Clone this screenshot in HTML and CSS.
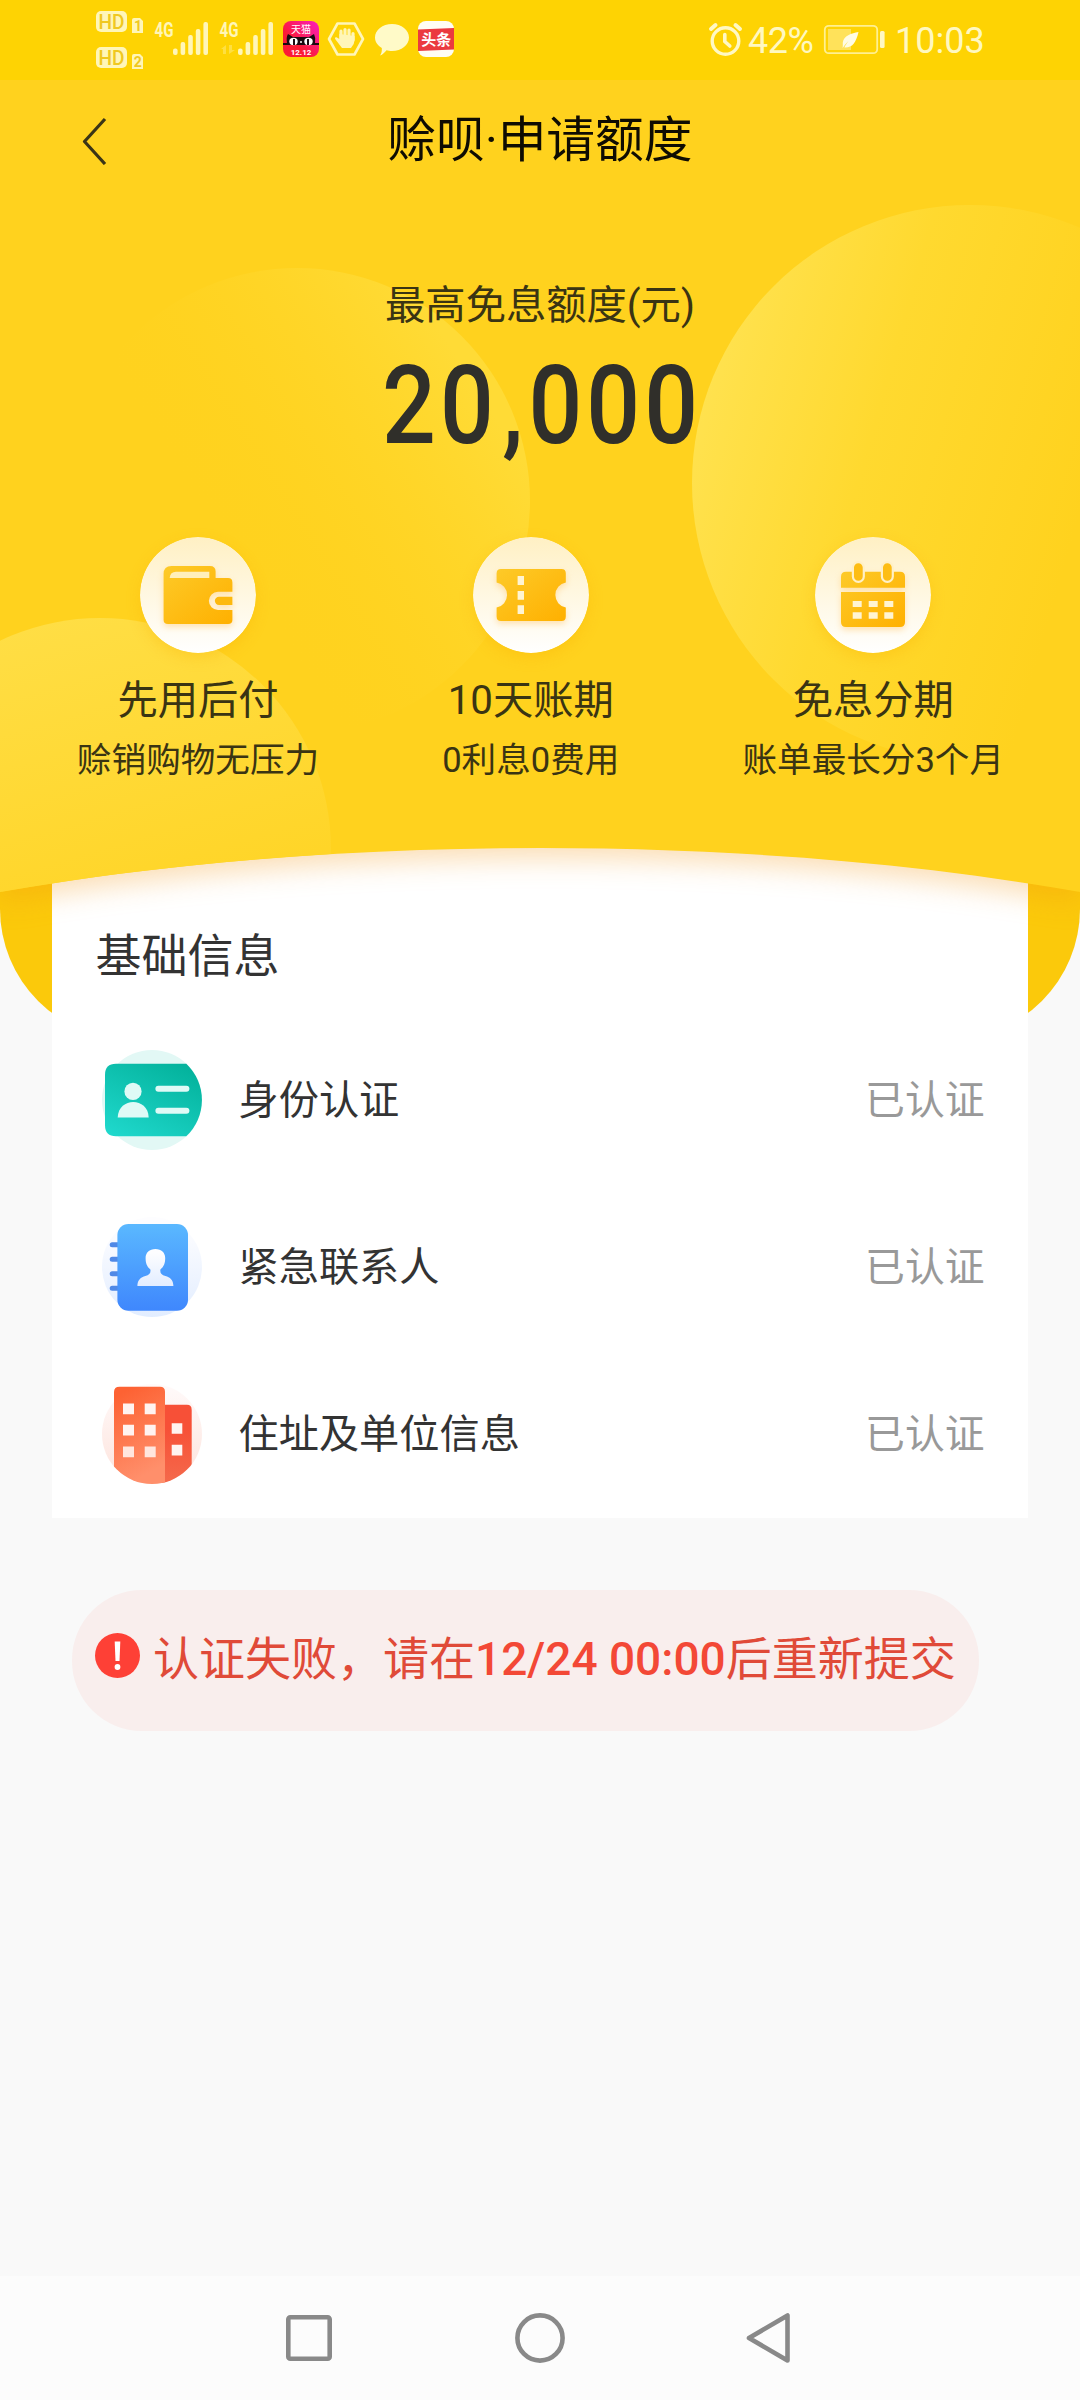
FILE: index.html
```html
<!DOCTYPE html>
<html lang="zh-CN">
<head>
<meta charset="utf-8">
<title>赊呗·申请额度</title>
<link rel="stylesheet" href="styles.css">
</head>
<body>
<div class="page">
  <header class="status">
    <svg class="status-left" width="370" height="80" viewBox="90 0 370 80">
      <g fill="#fff6b8">
        <rect x="96" y="11" width="31" height="21" rx="5"/>
        <rect x="96" y="47" width="31" height="21" rx="5"/>
        <path d="M134 18h6l3 3v12h-11v-13q0-2 2-2zM134 54h6l3 3v12h-11v-13q0-2 2-2z"/>
        <g id="bars">
          <rect x="173" y="48.5" width="4.600" height="6.5" rx="2"/>
          <rect x="180.600" y="42" width="4.600" height="13" rx="2"/>
          <rect x="188.200" y="35" width="4.600" height="20" rx="2"/>
          <rect x="195.800" y="29" width="4.600" height="26" rx="2"/>
          <rect x="203.400" y="22" width="4.600" height="33" rx="2"/>
        </g>
        <use href="#bars" x="65"/>
        <path opacity=".35" d="M221 49l5-4v9h-3v-5zM229 45v9l6-4h-3v-5z"/>
        <text class="net" x="154.500" y="37" textLength="19" lengthAdjust="spacingAndGlyphs">4G</text>
        <text class="net" x="219.500" y="37" textLength="19" lengthAdjust="spacingAndGlyphs">4G</text>
      </g>
      <g fill="#f0c820">
        <text class="hd" x="98.500" y="28.500" textLength="26" lengthAdjust="spacingAndGlyphs">HD</text>
        <text class="hd" x="98.500" y="64.500" textLength="26" lengthAdjust="spacingAndGlyphs">HD</text>
        <text class="sim" x="134" y="31">1</text>
        <text class="sim" x="133.800" y="67">2</text>
      </g>
      <defs><linearGradient id="tm" x1="0" y1="1" x2="1" y2="0"><stop offset=".35" stop-color="#fb1a35"/><stop offset="1" stop-color="#fb1fc0"/></linearGradient></defs>
      <rect x="283" y="21" width="36" height="36" rx="8" fill="url(#tm)"/>
      <path d="M283 43h4q-1-6 1-9l5 3h16l5-3q2 4 1 9h4v2h-36z" fill="#1a0a10"/>
      <ellipse cx="293.500" cy="41.500" rx="4.200" ry="3.700" fill="#fff"/><ellipse cx="308.500" cy="41.500" rx="4.200" ry="3.700" fill="#fff"/>
      <path d="M294 39v6M308 39v6" stroke="#1a0a10" stroke-width="2"/>
      <circle cx="301" cy="42" r="1" fill="#fff"/>
      <text class="tm-name" x="301" y="32.500">天猫</text>
      <text class="tm-date" x="301" y="55">12.12</text>
      <path d="M337.500 23.500h17l8.500 15.500-8.500 15.500h-17L329 39z" fill="none" stroke="#fff6b8" stroke-width="2.600" stroke-linejoin="round"/>
      <path d="M341 38V31M345 38V29.500M349 38v-8M353 40v-6.500" stroke="#fff6b8" stroke-width="3.200" stroke-linecap="round"/>
      <path d="M339.400 34v5l-2.500-1.500c-2-.8-2.500 1-1.200 2.200l6.300 8.300h9q3.600-4 3.600-8v-4z" fill="#fff6b8"/>
      <path d="M392 24c9.500 0 17 6 17 13.500S401.500 51 392 51c-2 0-4-.3-5.500-.8-1.500 2-4 4.500-6.500 5.300 1.500-2 2-4.500 1.800-7.500-4-2.500-6.800-6-6.800-10.500C375 30 382.500 24 392 24z" fill="#fffac8"/>
      <rect x="418" y="21" width="36" height="36" rx="8" fill="#fffdf4"/>
      <path d="M418 29.500l36-1.500v21.500l-36 1.500z" fill="#eb3a3f"/>
      <text class="tt" x="436.300" y="45">头条</text>
    </svg>
    <div class="status-right">
      <svg width="36" height="80" viewBox="708 0 36 80" fill="none" stroke="#fff8c4" stroke-linecap="round">
        <circle cx="725.500" cy="41" r="13.300" stroke-width="3.400"/><path d="M724.800 34.500v7l5 4.500" stroke-width="3.600"/><path d="M711 29l4.500-4M740 29l-4.500-4" stroke-width="4"/>
      </svg>
      <span class="pct">42%</span>
      <svg class="batt" width="64" height="80" viewBox="823 0 64 80">
        <rect x="824.800" y="25.800" width="52.400" height="27.400" rx="4" fill="none" stroke="#fff091" stroke-width="1.800"/>
        <rect x="828" y="29" width="23" height="21" fill="#ffe25a"/>
        <rect x="880" y="31" width="4.600" height="17" rx="1.500" fill="#fff8c4"/>
        <path d="M858.500 32c-7 1-15 4-15.700 10.500-.1 2 .3 3.300-.3 5.500 1.500-1.500 2.500-4 6-7-2 3-3.500 4.500-4 6.500 7.500.5 11.500-4.500 14-15.500z" fill="#fffce4"/>
      </svg>
      <span class="clock">10:03</span>
    </div>
  </header>

  <div class="hero-tail"></div>
  <svg class="hero-bg" width="1080" height="980" viewBox="0 0 1080 980">
    <defs>
      <linearGradient id="g1" x1="0" y1=".35" x2=".7" y2=".55"><stop offset="0" stop-color="#ffe250"/><stop offset=".45" stop-color="#ffd92f"/><stop offset="1" stop-color="#ffd21e"/></linearGradient>
      <linearGradient id="g2" x1=".85" y1=".2" x2=".3" y2=".55"><stop offset="0" stop-color="#ffdb36"/><stop offset="1" stop-color="#ffd21e" stop-opacity="0"/></linearGradient>
      <linearGradient id="g3" x1=".35" y1="0" x2=".6" y2=".85"><stop offset="0" stop-color="#ffde45"/><stop offset="1" stop-color="#ffd21e"/></linearGradient>
      <clipPath id="dome"><path d="M0 80H1080V892C900 860 710 848 540 848S180 860 0 892Z"/></clipPath>
    </defs>
    <path class="dome" d="M0 80H1080V892C900 860 710 848 540 848S180 860 0 892Z"/>
    <g clip-path="url(#dome)">
      <circle cx="297" cy="501" r="233" fill="url(#g2)"/>
      <circle cx="970" cy="483" r="278" fill="url(#g1)"/>
      <circle cx="100" cy="849" r="231" fill="url(#g3)"/>
    </g>
  </svg>

  <section class="hero">
    <div class="navbar">
      <svg class="back" width="26" height="48" viewBox="0 0 26 48"><path d="M24 2L3.500 24.500 24 47" fill="none" stroke="#3b3516" stroke-width="3.200" stroke-linejoin="round"/></svg>
      <h1 class="title">赊呗·申请额度</h1>
    </div>
    <p class="label">最高免息额度(元)</p>
    <p class="amount"><span class="digits">20<span class="comma">,</span>000</span></p>
    <div class="features">
      <svg width="0" height="0" class="defs"><defs>
        <linearGradient id="disc" x1="0" y1="0" x2="0" y2="1"><stop offset="0" stop-color="#fff0c4"/><stop offset="1" stop-color="#fff"/></linearGradient>
        <linearGradient id="or" x1="0" y1="0" x2="1" y2="1"><stop offset="0" stop-color="#fdca28"/><stop offset="1" stop-color="#ffb000"/></linearGradient>
      </defs></svg>
      <div class="feature">
        <svg class="disc" width="116" height="116" viewBox="0 0 116 116">
          <circle cx="58" cy="58" r="58" fill="url(#disc)"/>
          <g class="glyph"><path d="M31.500 29H70q5.600 0 5.600 5.500V41H88q4.400 0 4.400 4.400V54.700H78a9.100 9.100 0 0 0 0 18.300H92.400V83q0 4-4.400 4H28q-4.400 0-4.400-4V37q0-8 7.900-8z" fill="url(#or)"/>
          <path d="M92.400 59.700V68H79a4.150 4.150 0 0 1 0-8.300z" fill="#fdb90e"/></g>
          <path d="M29.700 41q.5-6.300 6.300-6.300H69.300V41z" fill="#ffefbb"/>
        </svg>
        <h2>先用后付</h2><p>赊销购物无压力</p>
      </div>
      <div class="feature">
        <svg class="disc" width="116" height="116" viewBox="0 0 116 116">
          <circle cx="58" cy="58" r="58" fill="url(#disc)"/>
          <path class="glyph" d="M28 32H88.500q4.300 0 4.300 4.300V45.500a12.700 12.700 0 0 0 0 25V79.500q0 4.500-4.300 4.500H28q-4.400 0-4.400-4.500V70.500a12.700 12.700 0 0 0 0-25V36.300Q23.600 32 28 32z" fill="url(#or)"/>
          <path d="M44.600 39H51v9h-6.400zM44.600 54H51v8.700h-6.400zM44.600 68.300H51V77h-6.400z" fill="#fff4d2"/>
        </svg>
        <h2>10天账期</h2><p>0利息0费用</p>
      </div>
      <div class="feature">
        <svg class="disc" width="116" height="116" viewBox="0 0 116 116">
          <circle cx="58" cy="58" r="58" fill="url(#disc)"/>
          <path class="glyph" d="M31 34.700H85q5 0 5 5V50.700H26v-11q0-5 5-5zM26 55H90V85q0 5-5 5H31q-5 0-5-5z" fill="url(#or)"/>
          <g fill="#fdbd14" stroke="#fff0c6" stroke-width="2.200"><rect x="37.900" y="25.200" width="10.900" height="19.600" rx="5.400"/><rect x="66.900" y="25.200" width="10.900" height="19.600" rx="5.400"/></g>
          <path d="M37.700 64h9v6h-9zM53.700 64h9v6h-9zM69.300 64h9v6h-9zM37.700 75.300h9v6.400h-9zM53.700 75.300h9v6.400h-9zM69.300 75.300h9v6.400h-9z" fill="#fff4d2"/>
        </svg>
        <h2>免息分期</h2><p>账单最长分3个月</p>
      </div>
    </div>
  </section>

  <section class="card">
    <h2 class="card-title">基础信息</h2>
    <div class="row">
      <svg width="100" height="100" viewBox="0 0 100 100">
        <defs><linearGradient id="id" x1=".1" y1="1" x2=".75" y2="0"><stop offset="0" stop-color="#1fd8cc"/><stop offset="1" stop-color="#04b39d"/></linearGradient></defs>
        <circle cx="50" cy="50" r="50" fill="#e2f8f5"/>
        <path d="M14 13.700H84.300A50 50 0 0 1 84.300 86.300H14Q3 86.300 3 75.300V24.700Q3 13.700 14 13.700z" fill="url(#id)"/>
        <g fill="#dffaf6"><circle cx="31" cy="41.400" r="8.600"/><path d="M15.700 67.400C16.500 47 46 47 46.700 67.400z"/><rect x="53.400" y="35.700" width="34" height="6" rx="3"/><rect x="53.400" y="57.700" width="34" height="6" rx="3"/></g>
      </svg>
      <span class="name">身份认证</span><span class="state">已认证</span>
    </div>
    <div class="row">
      <svg width="100" height="100" viewBox="0 0 100 100">
        <defs><linearGradient id="bk" x1="0" y1="0" x2="0" y2="1"><stop offset="0" stop-color="#5ab8ff"/><stop offset="1" stop-color="#3f87fd"/></linearGradient>
        <linearGradient id="bc" x1="0" y1="0" x2="0" y2="1"><stop offset=".1" stop-color="#fdfdff"/><stop offset="1" stop-color="#e2edff"/></linearGradient></defs>
        <circle cx="50" cy="50" r="50" fill="url(#bc)"/>
        <path d="M10.200 27.700H17M10.200 42.300H17M10.200 56.700H17M10.200 71.300H17" stroke="#5089e6" stroke-width="5" stroke-linecap="round"/>
        <rect x="15.400" y="7" width="70.600" height="86.700" rx="11" fill="url(#bk)"/>
        <path d="M53.400 32c6 0 9.800 3.800 9.800 9 0 5-1.200 8.500-4.800 11.500-.5 4 1 5.500 5 6.500 4.500 1.200 8 4 8 10h-36c0-6 3.500-8.800 8-10 4-1 5.500-2.500 5-6.500-3.600-3-4.800-6.500-4.800-11.500 0-5.200 3.800-9 9.800-9z" fill="url(#bc)"/>
      </svg>
      <span class="name">紧急联系人</span><span class="state">已认证</span>
    </div>
    <div class="row">
      <svg width="100" height="100" viewBox="0 0 100 100">
        <defs><linearGradient id="b1" x1="0" y1="0" x2=".3" y2="1"><stop offset=".1" stop-color="#fd6233"/><stop offset="1" stop-color="#ff8f6b"/></linearGradient>
        <linearGradient id="b2" x1="0" y1="0" x2="0" y2="1"><stop offset=".3" stop-color="#f75037"/><stop offset="1" stop-color="#f46a4c"/></linearGradient>
        <linearGradient id="b3" x1="0" y1="0" x2="0" y2="1"><stop offset="0" stop-color="#fffafa"/><stop offset="1" stop-color="#fde3dc"/></linearGradient>
        <clipPath id="bcl"><path d="M0 0H100V50A50 50 0 0 1 0 50z"/></clipPath></defs>
        <circle cx="50" cy="50" r="50" fill="url(#b3)"/>
        <g clip-path="url(#bcl)"><path d="M60 20.800H85q4.700 0 4.700 5V100H60z" fill="url(#b2)"/><path d="M17.500 2.800H58q5 0 5 5V100H12V8q0-5.200 5.500-5.200z" fill="url(#b1)"/></g>
        <path d="M21 19.500h11v10.700H21zM42.700 19.500h11v10.700h-11zM21 40.800h11v10.700H21zM42.700 40.800h11v10.700h-11zM69.700 39.200h10.600v10.600H69.700zM69.700 60.800h10.600v10.700H69.700z" fill="#fff3f0"/>
        <path d="M21 62.500h11v10.700H21zM42.700 62.500h11v10.700h-11z" fill="#ffe6de"/>
      </svg>
      <span class="name">住址及单位信息</span><span class="state">已认证</span>
    </div>
  </section>

  <div class="alert">
    <svg width="45" height="45" viewBox="0 0 45 45"><circle cx="22.500" cy="22.500" r="22.500" fill="#fe4036"/><path d="M19.700 8.500h5.600l-.8 19.500h-4z" fill="#fff"/><circle cx="22.500" cy="34" r="2.900" fill="#fff"/></svg>
    <p>认证失败，请在<b>12/24 00:00</b>后重新提交</p>
  </div>

  <nav class="sysnav">
    <svg width="52" height="52" viewBox="0 0 52 52"><rect x="5.300" y="5.300" width="41.400" height="41.400" rx="2"/></svg>
    <svg width="52" height="52" viewBox="0 0 52 52"><circle cx="26" cy="26" r="22.600"/></svg>
    <svg width="52" height="52" viewBox="0 0 52 52"><path d="M42.500 3.500V48.500L4 26z"/></svg>
  </nav>
</div>
</body>
</html>
```
FILE: styles.css
```css
* { box-sizing: border-box; }
body, h1, h2, p { margin: 0; font-weight: 400; }
body { background: #f9f9f9; font-family: Roboto, "Noto Sans CJK SC", sans-serif; color: #333; }
svg { display: block; flex: none; }

.page { position: relative; width: 1080px; height: 2400px; display: flex; flex-direction: column; overflow: hidden; }

.status { position: relative; z-index: 3; height: 80px; background: #fed303; display: flex; justify-content: space-between; padding: 0 97px 0 90px; }
.status-right { display: flex; align-items: center; color: #fff8c0; font-size: 36px; line-height: 80px; }
.pct { width: 68px; margin-left: 4px; padding-top: 1px; white-space: nowrap; letter-spacing: -0.5px; }
.batt { margin-left: 7px; }
.clock { margin-left: 8px; width: 88px; padding-top: 1px; white-space: nowrap; }
.net { font: 700 21px Roboto, sans-serif; }
.hd { font: 500 20px Roboto, sans-serif; }
.sim { font: 700 14px Roboto, sans-serif; }
.tm-name { font: 400 10px "Noto Sans CJK SC", sans-serif; fill: #fff; text-anchor: middle; }
.tm-date { font: 700 8px Roboto, sans-serif; fill: #fff; text-anchor: middle; }
.tt { font: 700 15px "Noto Sans CJK SC", sans-serif; fill: #fff; text-anchor: middle; }

.hero-tail { position: absolute; left: 0; top: 700px; width: 1080px; height: 339px; border-radius: 0 0 130px 130px; background: #fbc90b; }
.hero-bg { position: absolute; left: 0; top: 0; z-index: 2; pointer-events: none; }
.dome { fill: #ffd21e; filter: drop-shadow(0 10px 14px rgba(244, 150, 20, 0.32)); }

.hero { position: relative; z-index: 3; }
.navbar { height: 122px; display: flex; align-items: center; padding: 0 80px 0 81px; }
.title { flex: 1; margin-right: 27px; text-align: center; font-size: 48.700px; line-height: 60px; color: #0f0c02; }
.label { margin-top: 74px; text-align: center; font-size: 40.300px; line-height: 60px; color: #3a3413; }
.amount { height: 134px; padding-top: 3px; text-align: center; font-size: 110px; line-height: 134px; font-weight: 500; color: #302f2a; }
.digits { display: inline-block; letter-spacing: 4.800px; transform: translateX(2px) scaleX(0.86); }
.comma { padding-left: 5px; letter-spacing: 6px; }
.features { margin-top: 67px; padding: 0 76px 0 77px; display: flex; justify-content: space-between; }
.defs { position: absolute; }
.feature { display: flex; flex-direction: column; align-items: center; color: #3a3413; }
.feature h2 { margin-top: 18px; font-size: 40.300px; line-height: 60px; }
.feature p { font-size: 34.600px; line-height: 58px; }
.disc { border-radius: 50%; box-shadow: 0 5px 14px rgba(250, 175, 0, 0.3); }
.glyph { filter: drop-shadow(0 3px 3px rgba(255, 180, 60, 0.35)); }

.card { position: relative; z-index: 1; margin: 51px 52px 0; height: 678px; padding: 86px 43.500px 0 43.500px; background: #fff; }
.card-title { font-size: 46px; line-height: 60px; margin-bottom: 30px; }
.row { height: 167px; display: flex; align-items: center; padding-left: 6px; }
.name { margin: -7px 0 0 37px; font-size: 40.200px; }
.state { margin: -7px 0 0 auto; font-size: 39.800px; color: #999; }

.alert { margin: 72px 0 0 72px; width: 907px; height: 141px; border-radius: 70px; background: #f9eeed; display: flex; align-items: center; padding: 0 23px; color: #e04a38; }
.alert svg { margin-top: -11px; }
.alert p { margin: -12px 0 0 13px; font-size: 46px; white-space: nowrap; }
.alert b { font-weight: 500; color: #f34836; }

.sysnav { margin-top: auto; height: 124px; background: #fcfcfc; display: flex; justify-content: center; gap: 179px; align-items: center; }
.sysnav svg { fill: none; stroke: #898989; stroke-width: 4.600px; stroke-linejoin: round; }
```
